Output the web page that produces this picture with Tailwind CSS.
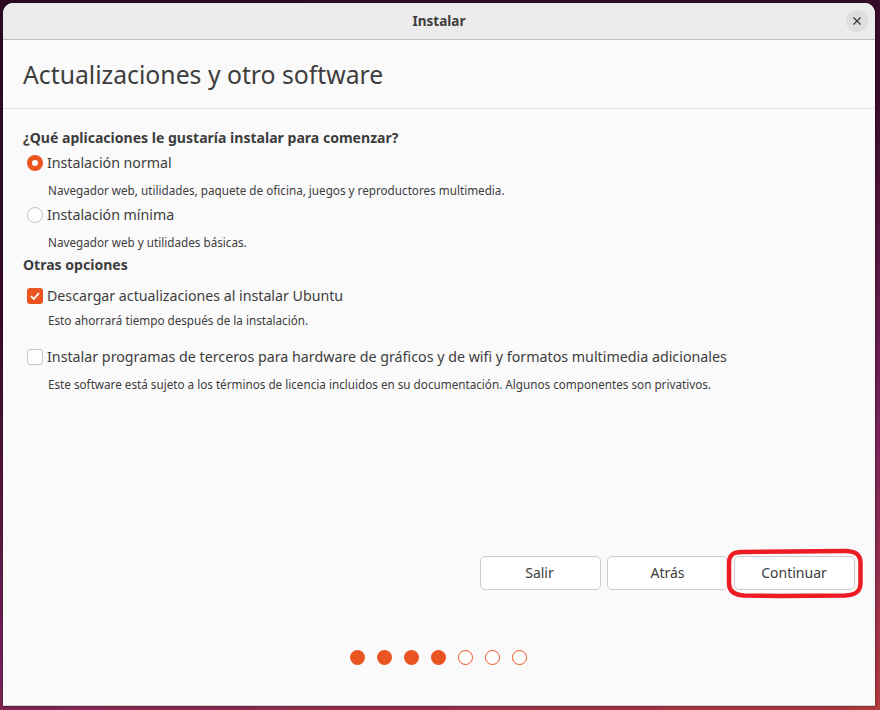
<!DOCTYPE html>
<html lang="es">
<head>
    <meta charset="UTF-8">
    <title>Instalar</title>
    <script src="https://cdn.jsdelivr.net/npm/@tailwindcss/browser@4"></script>
</head>
<body class="m-0 overflow-hidden font-['Noto_Sans',sans-serif]">
    <div class="w-[880px] h-[710px] pt-[3px] pl-[3px] pr-[5px] pb-[4px] bg-[linear-gradient(165deg,#2c0a24_0%,#3a0c2e_35%,#7a2459_72%,#b23a3f_100%)]">
        <div class="relative h-full flex flex-col bg-[#fafafa] rounded-t-[10px] overflow-hidden border-b border-[#d8d4d4] shadow-[0_0_3px_rgba(0,0,0,0.55)]">
            <!-- title bar -->
            <div class="relative h-[37px] shrink-0 flex items-center justify-center bg-[#ebebeb] border-b border-[#bdbdbd]">
                <span class="text-[13.5px] font-bold text-[#3d3d3d] pt-[1px]">Instalar</span>
                <button class="absolute right-[7px] top-[7px] w-[22px] h-[22px] rounded-full bg-[#dedede] flex items-center justify-center">
                    <svg width="10" height="10" viewBox="0 0 10 10"><path d="M1.5 1.5l7 7M8.5 1.5l-7 7" stroke="#3d3d3d" stroke-width="1.4" fill="none"/></svg>
                </button>
            </div>

            <!-- header -->
            <div class="h-[69px] shrink-0 flex items-center pl-[20px] pt-[2px] border-b border-[#e2e2e2]">
                <h1 class="text-[24.75px] text-[#3d3d3d]">Actualizaciones y otro software</h1>
            </div>

            <!-- options -->
            <div class="flex-1 pl-[20px] pt-[19px] text-[#3d3d3d]">
                <p class="text-[14.05px] font-bold leading-[20px]">¿Qué aplicaciones le gustaría instalar para comenzar?</p>

                <div class="flex items-center gap-[4px] pl-[4px] mt-[5px] h-[20px]">
                    <span class="w-[16px] h-[16px] rounded-full bg-[#e95420] flex items-center justify-center"><span class="w-[6px] h-[6px] rounded-full bg-white"></span></span>
                    <span class="text-[14.2px]">Instalación normal</span>
                </div>
                <p class="text-[11.7px] leading-[16px] ml-[25px] mt-[9px]">Navegador web, utilidades, paquete de oficina, juegos y reproductores multimedia.</p>

                <div class="flex items-center gap-[4px] pl-[4px] mt-[7px] h-[20px]">
                    <span class="w-[16px] h-[16px] rounded-full bg-white border border-[#c4c4c4]"></span>
                    <span class="text-[14.2px]">Instalación mínima</span>
                </div>
                <p class="text-[11.7px] leading-[16px] ml-[25px] mt-[9px]">Navegador web y utilidades básicas.</p>

                <p class="text-[14.05px] font-bold leading-[20px] mt-[5px]">Otras opciones</p>

                <div class="flex items-center gap-[4px] pl-[4px] mt-[11px] h-[20px]">
                    <span class="w-[16px] h-[16px] rounded-[3px] bg-[#e95420] flex items-center justify-center">
                        <svg width="12" height="12" viewBox="0 0 12 12"><path d="M2 6.2l2.8 2.8L10 3.2" stroke="#fff" stroke-width="1.8" fill="none"/></svg>
                    </span>
                    <span class="text-[14.2px]">Descargar actualizaciones al instalar Ubuntu</span>
                </div>
                <p class="text-[11.7px] leading-[16px] ml-[25px] mt-[6px]">Esto ahorrará tiempo después de la instalación.</p>

                <div class="flex items-center gap-[4px] pl-[4px] mt-[19px] h-[20px]">
                    <span class="w-[16px] h-[16px] rounded-[3px] bg-white border border-[#c4c4c4]"></span>
                    <span class="text-[14.25px]">Instalar programas de terceros para hardware de gráficos y de wifi y formatos multimedia adicionales</span>
                </div>
                <p class="text-[11.7px] leading-[16px] ml-[25px] mt-[9px]">Este software está sujeto a los términos de licencia incluidos en su documentación. Algunos componentes son privativos.</p>
            </div>

            <!-- buttons -->
            <div class="flex justify-end gap-[6px] pr-[20px] text-[14px] text-[#3d3d3d]">
                <button class="w-[121px] h-[34px] pb-[2px] pr-[2px] bg-white border border-[#cdcdcd] rounded-[5px]">Salir</button>
                <button class="w-[121px] h-[34px] pb-[2px] bg-white border border-[#cdcdcd] rounded-[5px]">Atrás</button>
                <button class="w-[121px] h-[34px] pb-[2px] pr-[1px] bg-white border border-[#cdcdcd] rounded-[5px]">Continuar</button>
            </div>

            <!-- progress -->
            <div class="h-[115px] shrink-0 flex justify-center items-start pt-[60px] gap-[12px] pr-[1px]">
                <span class="w-[15px] h-[15px] rounded-full bg-[#e95420]"></span>
                <span class="w-[15px] h-[15px] rounded-full bg-[#e95420]"></span>
                <span class="w-[15px] h-[15px] rounded-full bg-[#e95420]"></span>
                <span class="w-[15px] h-[15px] rounded-full bg-[#e95420]"></span>
                <span class="w-[15px] h-[15px] rounded-full bg-white border border-[#e95420]"></span>
                <span class="w-[15px] h-[15px] rounded-full bg-white border border-[#e95420]"></span>
                <span class="w-[15px] h-[15px] rounded-full bg-white border border-[#e95420]"></span>
            </div>

            <!-- annotation round Continuar, drawn by hand in the source -->
            <svg class="absolute left-[717px] top-[540px]" width="150" height="60" viewBox="0 0 150 60" fill="none">
                <path d="M9 20C9 12 13 9 22 9L125 8C135 8 140.500 11 140.500 20L140.500 40C140.500 49 135 52 125 52.500L60 53L24 52.500C14 52 9 48 9 40Z" stroke="#ed1c24" stroke-width="4.500"/>
            </svg>
        </div>
    </div>
</body>
</html>
